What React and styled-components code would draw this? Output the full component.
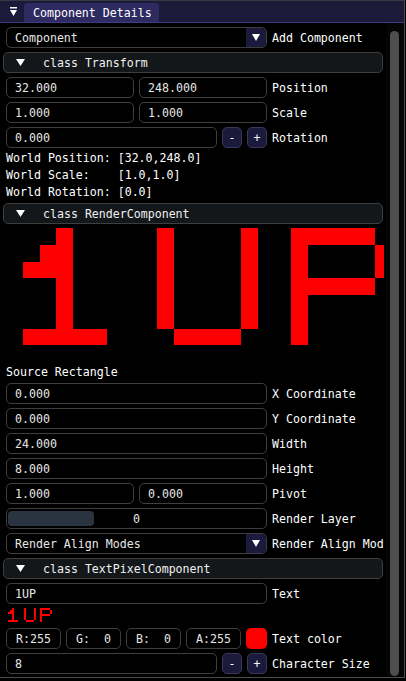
import styled, { createGlobalStyle } from 'styled-components';

const GlobalStyle = createGlobalStyle`
  html, body {
    margin: 0;
    padding: 0;
    background: #000;
  }
  body {
    font-family: "DejaVu Sans Mono", "Liberation Mono", monospace;
    font-size: 11.6px;
    color: #fff;
  }
`;

const Window = styled.div`
  box-sizing: border-box;
  width: 405px;
  height: 678px;
  background: #000;
  border-top: 1px solid #3a3a44;
  border-right: 1px solid #4a4a4a;
  border-bottom: 1px solid #4a4a4a;
  display: flex;
  flex-direction: column;
`;

const TitleBar = styled.div`
  box-sizing: border-box;
  height: 22px;
  flex-shrink: 0;
  background: #1b1a38;
  border-bottom: 1px solid #3f3c86;
  display: flex;
  align-items: flex-end;
  padding-left: 10px;
`;

const MenuIcon = styled.svg`
  width: 7px;
  height: 9px;
  margin-bottom: 6px;
`;

const Tab = styled.div`
  box-sizing: border-box;
  height: 19px;
  margin-left: 7px;
  padding: 0 7px 0 9px;
  background: #2e2a62;
  border-radius: 4px 4px 0 0;
  display: flex;
  align-items: center;
  white-space: pre;
`;

const Body = styled.div`
  flex: 1;
  min-height: 0;
  display: flex;
`;

const Content = styled.div`
  box-sizing: border-box;
  width: 384px;
  overflow: hidden;
  padding: 4px 0 0 6px;
  display: flex;
  flex-direction: column;
  gap: 4px;
`;

const Row = styled.div`
  height: 21px;
  display: flex;
  align-items: center;
  gap: 5px;
  flex-shrink: 0;
`;

const Frame = styled.div`
  box-sizing: border-box;
  width: ${(p) => p.$w}px;
  height: 21px;
  flex-shrink: 0;
  border: 1px solid #3e3e3e;
  border-radius: 5px;
  background: #000;
  color: #e6e6e6;
  display: flex;
  align-items: center;
  justify-content: ${(p) => (p.$center ? 'center' : 'flex-start')};
  padding: ${(p) => (p.$center ? '0' : '0 8px')};
  white-space: pre;
  overflow: hidden;
`;

const ComboFrame = styled(Frame)`
  padding: 0 0 0 8px;
  justify-content: space-between;
`;

const ComboArrow = styled.div`
  width: 20px;
  align-self: stretch;
  background: #1c1a3c;
  display: flex;
  align-items: center;
  justify-content: center;
  border-radius: 0 4px 4px 0;
`;

const SmallButton = styled.div`
  box-sizing: border-box;
  width: 20px;
  height: 21px;
  flex-shrink: 0;
  border: 1px solid #3a3858;
  border-radius: 5px;
  background: #1c1a3c;
  display: flex;
  align-items: center;
  justify-content: center;
  color: #fff;
`;

const Swatch = styled.div`
  box-sizing: border-box;
  width: 21px;
  height: 21px;
  flex-shrink: 0;
  border-radius: 5px;
  background: ${(p) => p.$color};
`;

const Label = styled.span`
  white-space: pre;
  color: #fff;
`;

const TextLine = styled.div`
  height: 13px;
  line-height: 13px;
  white-space: pre;
  flex-shrink: 0;
  color: #fff;
`;

const Header = styled.div`
  box-sizing: border-box;
  width: 380px;
  height: 21px;
  margin-left: -3px;
  flex-shrink: 0;
  background: #14171a;
  border: 1px solid #3e3e3e;
  border-radius: 5px;
  display: flex;
  align-items: center;
  padding-left: 12px;
  gap: 18px;
  white-space: pre;
  color: #f0f0f0;
`;

const SliderFrame = styled.div`
  box-sizing: border-box;
  width: 261px;
  height: 21px;
  flex-shrink: 0;
  border: 1px solid #3e3e3e;
  border-radius: 5px;
  display: grid;
  align-items: center;
  color: #e6e6e6;
  > * {
    grid-area: 1 / 1;
  }
`;

const SliderGrab = styled.div`
  width: 86px;
  height: 15px;
  margin-left: 1px;
  justify-self: start;
  background: #2a3441;
  border-radius: 4px;
`;

const SliderValue = styled.span`
  justify-self: center;
`;

const PixelCanvas = styled.svg`
  flex-shrink: 0;
  display: block;
  shape-rendering: crispEdges;
`;

const Scrollbar = styled.div`
  box-sizing: border-box;
  width: 18px;
  margin-left: 2px;
  padding: 8px 5px 1px 4px;
  background: #050505;
  display: flex;
`;

const ScrollGrab = styled.div`
  flex: 1;
  background: #4e4e4e;
  border-radius: 5px;
`;

const Triangle = ({ w = 9, h = 7 }) => (
  <svg width={w} height={h} viewBox={`0 0 ${w} ${h}`}>
    <polygon points={`0,0 ${w},0 ${w / 2},${h}`} fill="#fff" />
  </svg>
);

// 1UP glyphs on a 24x8 grid: [col, row, w, h]
const glyphRects = [
  [3, 0, 1, 6],
  [2, 1, 1, 2],
  [1, 2, 1, 1],
  [1, 6, 5, 1],
  [9, 0, 1, 6],
  [14, 0, 1, 6],
  [10, 6, 4, 1],
  [17, 0, 1, 7],
  [18, 0, 4, 1],
  [22, 1, 1, 2],
  [18, 3, 4, 1],
];

const PixelText = ({ width, height }) => (
  <PixelCanvas width={width} height={height} viewBox="0 0 24 8" preserveAspectRatio="none">
    {glyphRects.map(([x, y, w, h], i) => (
      <rect key={i} x={x} y={y} width={w} height={h} fill="#ff0000" />
    ))}
  </PixelCanvas>
);

const Combo = ({ value, label }) => (
  <Row>
    <ComboFrame $w={261}>
      <span>{value}</span>
      <ComboArrow>
        <Triangle w={8} h={7} />
      </ComboArrow>
    </ComboFrame>
    <Label>{label}</Label>
  </Row>
);

const Field = ({ value, label }) => (
  <Row>
    <Frame $w={261}>{value}</Frame>
    <Label>{label}</Label>
  </Row>
);

const Pair = ({ a, b, label }) => (
  <Row>
    <Frame $w={128}>{a}</Frame>
    <Frame $w={128}>{b}</Frame>
    <Label>{label}</Label>
  </Row>
);

const Stepper = ({ value, label }) => (
  <Row>
    <Frame $w={211}>{value}</Frame>
    <SmallButton>-</SmallButton>
    <SmallButton>+</SmallButton>
    <Label>{label}</Label>
  </Row>
);

const Section = ({ title }) => (
  <Header>
    <Triangle w={9} h={7} />
    <span>{title}</span>
  </Header>
);

const App = () => {
  return (
    <>
      <GlobalStyle />
      <Window>
        <TitleBar>
          <MenuIcon viewBox="0 0 7 9">
            <rect x="0" y="0" width="7" height="1.5" fill="#fff" />
            <polygon points="0,3 7,3 3.5,9" fill="#fff" />
          </MenuIcon>
          <Tab>Component Details</Tab>
        </TitleBar>
        <Body>
          <Content>
            <Combo value="Component" label="Add Component" />
            <Section title="class Transform" />
            <Pair a="32.000" b="248.000" label="Position" />
            <Pair a="1.000" b="1.000" label="Scale" />
            <Stepper value="0.000" label="Rotation" />
            <TextLine>World Position: [32.0,248.0]</TextLine>
            <TextLine>World Scale:    [1.0,1.0]</TextLine>
            <TextLine>World Rotation: [0.0]</TextLine>
            <Section title="class RenderComponent" />
            <PixelText width={403} height={134} />
            <TextLine>Source Rectangle</TextLine>
            <Field value="0.000" label="X Coordinate" />
            <Field value="0.000" label="Y Coordinate" />
            <Field value="24.000" label="Width" />
            <Field value="8.000" label="Height" />
            <Pair a="1.000" b="0.000" label="Pivot" />
            <Row>
              <SliderFrame>
                <SliderGrab />
                <SliderValue>0</SliderValue>
              </SliderFrame>
              <Label>Render Layer</Label>
            </Row>
            <Combo value="Render Align Modes" label="Render Align Mod" />
            <Section title="class TextPixelComponent" />
            <Field value="1UP" label="Text" />
            <PixelText width={48} height={16} />
            <Row>
              <Frame $w={55} $center>R:255</Frame>
              <Frame $w={55} $center>G:  0</Frame>
              <Frame $w={55} $center>B:  0</Frame>
              <Frame $w={55} $center>A:255</Frame>
              <Swatch $color="#ff0000" />
              <Label>Text color</Label>
            </Row>
            <Stepper value="8" label="Character Size" />
          </Content>
          <Scrollbar>
            <ScrollGrab />
          </Scrollbar>
        </Body>
      </Window>
    </>
  );
};

export default App;
